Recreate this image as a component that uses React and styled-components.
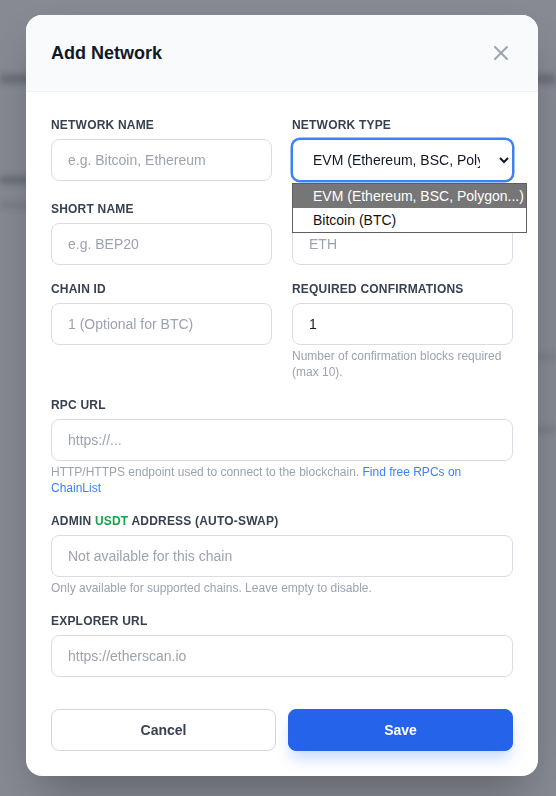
import React from "react";
import styled, { createGlobalStyle } from "styled-components";

const Global = createGlobalStyle`
  html, body { margin: 0; padding: 0; }
  body {
    width: 556px;
    height: 796px;
    overflow: hidden;
    background: #878a93;
    font-family: "Liberation Sans", Arial, sans-serif;
  }
  * { box-sizing: border-box; }
`;

const Page = styled.div`
  display: flex;
  flex-direction: column;
  height: 796px;
  filter: blur(3px);
`;

const BgBand = styled.div`
  margin-top: ${(p) => p.$mt}px;
  height: ${(p) => p.$h}px;
  width: ${(p) => p.$w};
  align-self: ${(p) => (p.$right ? "flex-end" : "flex-start")};
  background: rgba(40, 42, 50, ${(p) => p.$alpha});
`;

const Overlay = styled.div`
  position: fixed;
  inset: 0;
  display: flex;
  align-items: flex-start;
  justify-content: flex-start;
  padding: 15px 0 0 26px;
`;

const Modal = styled.div`
  width: 512px;
  background: #ffffff;
  border-radius: 16px;
  overflow: visible;
  box-shadow: 0 25px 50px -12px rgba(0, 0, 0, 0.3);
`;

const Header = styled.div`
  display: flex;
  align-items: center;
  justify-content: space-between;
  padding: 24px 25px;
  background: #f8fafc;
  border-bottom: 1px solid #eef1f5;
  border-radius: 16px 16px 0 0;
`;

const Title = styled.h2`
  margin: 0;
  font-size: 18px;
  line-height: 28px;
  font-weight: 700;
  color: #111827;
`;

const CloseButton = styled.button`
  display: flex;
  align-items: center;
  justify-content: center;
  width: 24px;
  height: 24px;
  padding: 0;
  border: none;
  background: transparent;
  color: #9ca3af;
  cursor: pointer;
`;

const Body = styled.div`
  display: flex;
  flex-direction: column;
  gap: 17px;
  padding: 25px 25px 25px;
`;

const Row = styled.div`
  display: grid;
  grid-template-columns: 1fr 1fr;
  column-gap: 20px;
  margin-bottom: ${(p) => p.$extra || 0}px;
`;

const Field = styled.div`
  display: flex;
  flex-direction: column;
  min-width: 0;
`;

const Label = styled.label`
  display: block;
  margin-bottom: 6px;
  font-size: 12px;
  line-height: 16px;
  font-weight: 700;
  letter-spacing: 0.2px;
  text-transform: uppercase;
  color: #374151;
`;

const Accent = styled.span`
  color: #16a34a;
`;

const Input = styled.input`
  width: 100%;
  height: 42px;
  padding: 10px 16px;
  border: 1px solid #d9dce1;
  border-radius: 8px;
  background: #ffffff;
  font-family: inherit;
  font-size: 14px;
  line-height: 20px;
  color: #111827;
  outline: none;
  &::placeholder { color: #9ca3af; }
`;

const SelectWrap = styled.div`
  position: relative;
`;

const Select = styled.select`
  width: 100%;
  height: 42px;
  padding: 10px 16px;
  border: 1px solid #3b82f6;
  border-radius: 8px;
  box-shadow: 0 0 0 1.5px #3b82f6;
  background: #ffffff;
  font-family: inherit;
  font-size: 14px;
  color: #111827;
  outline: none;
`;

const OptionList = styled.div`
  position: absolute;
  top: calc(100% + 2px);
  left: 0;
  width: 235px;
  z-index: 5;
  display: flex;
  flex-direction: column;
  border: 1px solid #5f5f5f;
  background: #ffffff;
`;

const OptionItem = styled.div`
  height: 24px;
  padding: 0 0 0 20px;
  display: flex;
  align-items: center;
  font-size: 14px;
  white-space: nowrap;
  color: ${(p) => (p.$active ? "#ffffff" : "#111111")};
  background: ${(p) => (p.$active ? "#767676" : "#ffffff")};
`;

const Help = styled.p`
  margin: 3px 0 0;
  font-size: 12px;
  line-height: 16px;
  color: #9ca3af;
`;

const HelpLink = styled.a`
  color: #3b82f6;
  text-decoration: none;
`;

const Actions = styled.div`
  display: flex;
  gap: 12px;
  margin-top: 15px;
`;

const Button = styled.button`
  flex: 1;
  height: 42px;
  border-radius: 8px;
  font-family: inherit;
  font-size: 14px;
  font-weight: 700;
  cursor: pointer;
  border: 1px solid ${(p) => (p.$primary ? "#2563eb" : "#d4d7dd")};
  background: ${(p) => (p.$primary ? "#2563eb" : "#ffffff")};
  color: ${(p) => (p.$primary ? "#ffffff" : "#374151")};
  box-shadow: ${(p) =>
    p.$primary ? "0 10px 15px -3px rgba(59, 130, 246, 0.3)" : "none"};
`;

function XIcon() {
  return (
    <svg width="24" height="24" viewBox="0 0 24 24" fill="none" stroke="currentColor" strokeWidth="2" strokeLinecap="round" strokeLinejoin="round">
      <path d="M18 6 6 18" />
      <path d="m6 6 12 12" />
    </svg>
  );
}

export default function App() {
  return (
    <>
      <Global />
      <Page>
        <BgBand $mt={74} $h={10} $w="100%" $alpha={0.28} />
        <BgBand $mt={92} $h={8} $w="60px" $alpha={0.3} />
        <BgBand $mt={18} $h={6} $w="60px" $alpha={0.15} />
        <BgBand $mt={146} $h={5} $w="40px" $alpha={0.15} $right />
        <BgBand $mt={68} $h={5} $w="40px" $alpha={0.18} $right />
      </Page>
      <Overlay>
        <Modal>
          <Header>
            <Title>Add Network</Title>
            <CloseButton aria-label="Close">
              <XIcon />
            </CloseButton>
          </Header>
          <Body>
            <Row $extra={3}>
              <Field>
                <Label>Network Name</Label>
                <Input placeholder="e.g. Bitcoin, Ethereum" />
              </Field>
              <Field>
                <Label>Network Type</Label>
                <SelectWrap>
                  <Select defaultValue="evm">
                    <option value="evm">EVM (Ethereum, BSC, Polygon...)</option>
                    <option value="btc">Bitcoin (BTC)</option>
                  </Select>
                  <OptionList>
                    <OptionItem $active>EVM (Ethereum, BSC, Polygon...)</OptionItem>
                    <OptionItem>Bitcoin (BTC)</OptionItem>
                  </OptionList>
                </SelectWrap>
              </Field>
            </Row>
            <Row $extra={-1}>
              <Field>
                <Label>Short Name</Label>
                <Input placeholder="e.g. BEP20" />
              </Field>
              <Field>
                <Label>Symbol</Label>
                <Input placeholder="ETH" />
              </Field>
            </Row>
            <Row>
              <Field>
                <Label>Chain ID</Label>
                <Input placeholder="1 (Optional for BTC)" />
              </Field>
              <Field>
                <Label>Required Confirmations</Label>
                <Input defaultValue="1" />
                <Help>Number of confirmation blocks required (max 10).</Help>
              </Field>
            </Row>
            <Field>
              <Label>RPC URL</Label>
              <Input placeholder="https://..." />
              <Help>
                HTTP/HTTPS endpoint used to connect to the blockchain.{" "}
                <HelpLink href="#">Find free RPCs on ChainList</HelpLink>
              </Help>
            </Field>
            <Field>
              <Label>
                Admin <Accent>USDT</Accent> Address (Auto-Swap)
              </Label>
              <Input placeholder="Not available for this chain" />
              <Help>Only available for supported chains. Leave empty to disable.</Help>
            </Field>
            <Field>
              <Label>Explorer URL</Label>
              <Input placeholder="https://etherscan.io" />
            </Field>
            <Actions>
              <Button>Cancel</Button>
              <Button $primary>Save</Button>
            </Actions>
          </Body>
        </Modal>
      </Overlay>
    </>
  );
}
